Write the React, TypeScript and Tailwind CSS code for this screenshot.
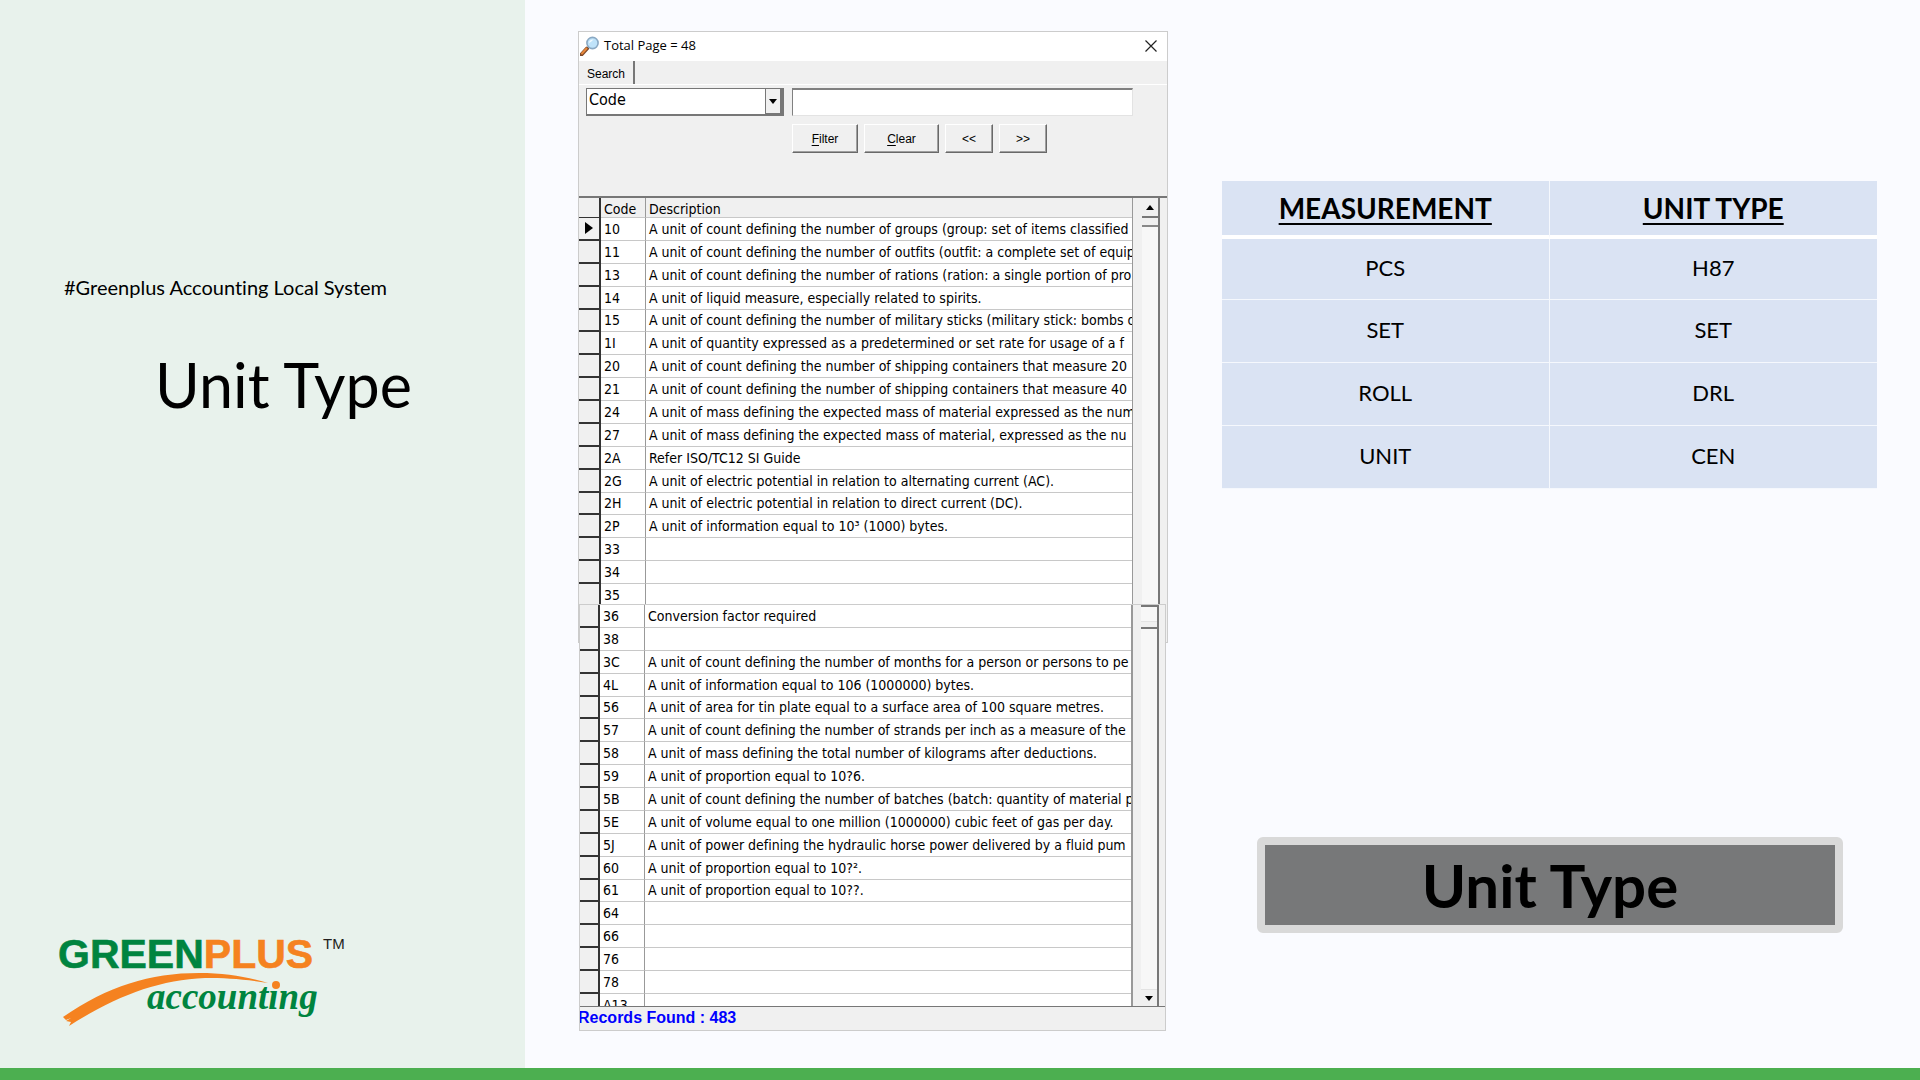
/**
 * Slide about the "Unit Type" codes of the Greenplus Accounting Local System.
 *
 * Left: title panel with the logo. Middle: the lookup window with its code list.
 * Right: the measurement to unit type table and the caption plate.
 */

import { useState } from 'react';

interface UnitRow {
  code: string;
  description?: string;
}

const UPPER_ROWS: UnitRow[] = [
  { code: '10', description: 'A unit of count defining the number of groups (group: set of items classified' },
  { code: '11', description: 'A unit of count defining the number of outfits (outfit: a complete set of equip' },
  { code: '13', description: 'A unit of count defining the number of rations (ration: a single portion of pro' },
  { code: '14', description: 'A unit of liquid measure, especially related to spirits.' },
  { code: '15', description: 'A unit of count defining the number of military sticks (military stick: bombs o' },
  { code: '1I', description: 'A unit of quantity expressed as a predetermined or set rate for usage of a f' },
  { code: '20', description: 'A unit of count defining the number of shipping containers that measure 20' },
  { code: '21', description: 'A unit of count defining the number of shipping containers that measure 40' },
  { code: '24', description: 'A unit of mass defining the expected mass of material expressed as the num' },
  { code: '27', description: 'A unit of mass defining the expected mass of material, expressed as the nu' },
  { code: '2A', description: 'Refer ISO/TC12 SI Guide' },
  { code: '2G', description: 'A unit of electric potential in relation to alternating current (AC).' },
  { code: '2H', description: 'A unit of electric potential in relation to direct current (DC).' },
  { code: '2P', description: 'A unit of information equal to 10³ (1000) bytes.' },
  { code: '33' },
  { code: '34' },
  { code: '35' },
];

const LOWER_ROWS: UnitRow[] = [
  { code: '36', description: 'Conversion factor required' },
  { code: '38' },
  { code: '3C', description: 'A unit of count defining the number of months for a person or persons to pe' },
  { code: '4L', description: 'A unit of information equal to 106 (1000000) bytes.' },
  { code: '56', description: 'A unit of area for tin plate equal to a surface area of 100 square metres.' },
  { code: '57', description: 'A unit of count defining the number of strands per inch as a measure of the' },
  { code: '58', description: 'A unit of mass defining the total number of kilograms after deductions.' },
  { code: '59', description: 'A unit of proportion equal to 10?6.' },
  { code: '5B', description: 'A unit of count defining the number of batches (batch: quantity of material p' },
  { code: '5E', description: 'A unit of volume equal to one million (1000000) cubic feet of gas per day.' },
  { code: '5J', description: 'A unit of power defining the hydraulic horse power delivered by a fluid pum' },
  { code: '60', description: 'A unit of proportion equal to 10?².' },
  { code: '61', description: 'A unit of proportion equal to 10??.' },
  { code: '64' },
  { code: '66' },
  { code: '76' },
  { code: '78' },
  { code: 'A13' },
];

const MEASUREMENTS = [
  ['PCS', 'H87'],
  ['SET', 'SET'],
  ['ROLL', 'DRL'],
  ['UNIT', 'CEN'],
];

const BUTTON =
  'h-[29px] border border-t-white border-l-white border-r-[#696969] border-b-[#696969] bg-[#f0f0f0] text-xs shadow-[inset_-1px_-1px_0_#a0a0a0]';

function Logo() {
  return (
    <svg viewBox="0 0 300 100" className="w-[300px] max-w-full" role="img" aria-label="Greenplus accounting">
      <text x="0" y="38" fontFamily="Liberation Sans, Arial, sans-serif" fontWeight="700" fontSize="41">
        <tspan fill="#00843f" stroke="#00843f" strokeWidth="0.6">GREEN</tspan>
        <tspan fill="#f58220" stroke="#f58220" strokeWidth="0.6">PLUS</tspan>
      </text>
      <text x="265" y="19" fontFamily="Liberation Sans, Arial, sans-serif" fontSize="15" fill="#231f20">
        TM
      </text>
      <path
        d="M5 87 C50 56 92 43 141 43 C168 43 190 47 210 53 C186 49 168 48 147 48 C100 50 58 66 11 96 L13 92 L8 91 L13 88 L8 90 Z"
        fill="#f58220"
      />
      <text
        x="89"
        y="79"
        fontFamily="Liberation Serif, Times New Roman, serif"
        fontStyle="italic"
        fontWeight="700"
        fontSize="37"
        fill="#00843f"
      >
        accountıng
      </text>
      <circle cx="218" cy="55" r="4" fill="#f58220" />
    </svg>
  );
}

function MagnifierIcon() {
  return (
    <svg viewBox="0 0 20 20" className="h-5 w-5" aria-hidden="true">
      <path d="M1.5 18.5 L7 12.5" stroke="#7d4a2c" strokeWidth="4" strokeLinecap="round" />
      <path d="M2 17.5 L6.5 12.5" stroke="#e8873a" strokeWidth="2" strokeLinecap="round" />
      <circle cx="12.5" cy="7" r="5.6" fill="#bfe3fa" stroke="#8aa9c4" strokeWidth="1.6" />
      <path d="M9 7 C9 4.5 11 3.3 13.5 3.5 C12 5 11 6 9 7 Z" fill="#f3fbff" />
    </svg>
  );
}

function UnitRows({ rows, current }: { rows: UnitRow[]; current?: string }) {
  return (
    <>
      {rows.map((row) => (
        <tr key={row.code}>
          <td className="border-r-2 border-b-2 border-[#333] bg-[#f0f0f0] p-0">
            {row.code === current && (
              <svg viewBox="0 0 8 12" className="ml-1.5 h-3 w-2" aria-label="Current row">
                <path d="M0 0 L8 6 L0 12 Z" fill="#000" />
              </svg>
            )}
          </td>
          <td className="border-r border-b border-r-[#999] border-b-[#c8c8c8] p-0 pl-[3px]">{row.code}</td>
          <td className="overflow-hidden border-b border-[#c8c8c8] p-0 pl-[3px] whitespace-nowrap">
            {row.description}
          </td>
        </tr>
      ))}
    </>
  );
}

function LookupWindow() {
  const [field, setField] = useState('Code');
  const [query, setQuery] = useState('');

  return (
    <div className="flex flex-col text-black">
      {/* Upper part: title bar, filter form and first rows */}
      <section className="h-[612px] overflow-hidden border border-[#ccc] bg-[#f0f0f0]">
        <header className="flex h-[29px] items-center bg-white pb-0.5 pl-px font-['Open_Sans',sans-serif] text-[13px]">
          <MagnifierIcon />
          <span className="ml-1">Total Page = 48</span>
          <button type="button" aria-label="Close" className="mr-2.5 ml-auto">
            <svg viewBox="0 0 12 12" className="h-3 w-3" fill="none" stroke="#222" strokeWidth="1.2">
              <path d="M0.5 0.5 L11.5 11.5 M11.5 0.5 L0.5 11.5" />
            </svg>
          </button>
        </header>

        <div className="h-[24px] border-b border-white font-['Liberation_Sans',Arial,sans-serif] text-xs">
          <button type="button" className="h-[23px] w-[56px] border-r-2 border-[#777] pt-0.5">
            Search
          </button>
        </div>

        <form
          className="h-[113px] border-b-2 border-[#777] pt-[3px] pl-[7px] font-['Liberation_Sans',Arial,sans-serif]"
          onSubmit={(e) => e.preventDefault()}
        >
          <div className="flex pr-[34px]">
            <div className="relative w-[198px] shrink-0">
              <select
                aria-label="Search field"
                value={field}
                onChange={(e) => setField(e.target.value)}
                className="h-[28px] w-full appearance-none border border-[#777] bg-white pb-1 pl-0.5 font-['DejaVu_Sans_Condensed','DejaVu_Sans',sans-serif] text-base leading-4 shadow-[inset_-1px_-1px_0_#777]"
              >
                <option>Code</option>
                <option>Description</option>
              </select>
              <span className="pointer-events-none absolute top-px right-0.5 flex h-[25px] w-[17px] items-center justify-center border-r-2 border-b border-l border-[#777] bg-[#f0f0f0]">
                <svg viewBox="0 0 8 5" className="h-[5px] w-2" aria-hidden="true">
                  <path d="M0 0 H8 L4 5 Z" fill="#000" />
                </svg>
              </span>
            </div>
            <input
              aria-label="Search text"
              value={query}
              onChange={(e) => setQuery(e.target.value)}
              className="ml-2 h-[28px] min-w-0 flex-1 border border-t-2 border-t-[#808080] border-r-[#e3e3e3] border-b-[#e3e3e3] border-l-[#808080] bg-white px-1 text-sm outline-none"
            />
          </div>
          <div className="mt-2 flex gap-[6px] pl-[206px]">
            <button type="submit" className={`${BUTTON} w-[66px]`}>
              <span className="underline underline-offset-2">F</span>ilter
            </button>
            <button type="button" onClick={() => setQuery('')} className={`${BUTTON} w-[75px]`}>
              <span className="underline underline-offset-2">C</span>lear
            </button>
            <button type="button" aria-label="Previous page" className={`${BUTTON} w-[48px]`}>
              &lt;&lt;
            </button>
            <button type="button" aria-label="Next page" className={`${BUTTON} w-[48px]`}>
              &gt;&gt;
            </button>
          </div>
        </form>

        <div className="flex h-[406px] overflow-hidden pr-[7px]">
          <div className="min-w-0 flex-1 border-r border-[#999]">
            <table className="h-[409px] w-full table-fixed border-separate border-spacing-0 bg-white font-['DejaVu_Sans_Condensed','DejaVu_Sans',sans-serif] text-sm leading-5">
              <colgroup>
                <col className="w-[22px]" />
                <col className="w-[45px]" />
                <col />
              </colgroup>
              <thead className="bg-[#f0f0f0] text-left">
                <tr className="h-5">
                  <th className="h-5 border-r-2 border-b border-[#333] p-0" />
                  <th className="border-r border-b border-r-[#999] border-b-[#c8c8c8] p-0 pt-0.5 pl-[3px] leading-4 font-normal">
                    Code
                  </th>
                  <th className="border-b border-[#c8c8c8] p-0 pt-0.5 pl-[3px] leading-4 font-normal">Description</th>
                </tr>
              </thead>
              <tbody>
                <UnitRows rows={UPPER_ROWS} current="10" />
              </tbody>
            </table>
          </div>
          <div className="ml-[9px] flex w-[18px] flex-col border-r-2 border-[#777] bg-[#f7f7f7]">
            <span className="flex h-5 items-center justify-center border-b-2 border-[#777] bg-[#f0f0f0]">
              <svg viewBox="0 0 8 5" className="h-[5px] w-2" aria-hidden="true">
                <path d="M0 5 H8 L4 0 Z" fill="#000" />
              </svg>
            </span>
            <span className="h-[9px] border-b-2 border-[#888] bg-[#f0f0f0]" />
          </div>
        </div>
      </section>

      {/* Lower part lies over the tail of the upper one */}
      <section className="relative mt-[-39px] mr-0.5 ml-px flex flex-col border border-[#ccc] bg-[#f0f0f0]">
        <div className="flex h-[402px] overflow-hidden border-b border-[#777] pr-[6px]">
          <div className="min-w-0 flex-1 border-r-2 border-[#999]">
            <table className="h-[412px] w-full table-fixed border-separate border-spacing-0 bg-white font-['DejaVu_Sans_Condensed','DejaVu_Sans',sans-serif] text-sm leading-5">
              <colgroup>
                <col className="w-[20px]" />
                <col className="w-[45px]" />
                <col />
              </colgroup>
              <tbody>
                <UnitRows rows={LOWER_ROWS} />
              </tbody>
            </table>
          </div>
          <div className="ml-2 flex w-[18px] flex-col border-r-2 border-[#777] bg-[#f7f7f7]">
            <span className="h-[16px] border-t-2 border-[#777]" />
            <span className="h-[8px] border-t border-b-2 border-t-[#e3e3e3] border-b-[#777] bg-[#f0f0f0]" />
            <span className="mt-auto flex h-[17px] items-center justify-center border-t border-[#e3e3e3] bg-[#f0f0f0]">
              <svg viewBox="0 0 8 5" className="h-[5px] w-2" aria-hidden="true">
                <path d="M0 0 H8 L4 5 Z" fill="#000" />
              </svg>
            </span>
          </div>
        </div>
        <p className="h-[23px] overflow-hidden font-['Liberation_Sans',Arial,sans-serif] text-base leading-[22px] font-bold text-[#0000ff]">
          <span className="-ml-0.5">Records Found : 483</span>
        </p>
      </section>
    </div>
  );
}

function MeasurementTable() {
  return (
    <table className="w-full table-fixed border-separate border-spacing-0 bg-[#dae3f3] text-center text-[22px] leading-7">
      <thead className="text-[28px]">
        <tr className="h-[58px]">
          {['MEASUREMENT', 'UNIT TYPE'].map((title) => (
            <th
              key={title}
              className="border-r border-b-4 border-[#f5f8fd] border-b-white p-0 font-bold underline decoration-2 underline-offset-4 last:border-r-0"
            >
              {title}
            </th>
          ))}
        </tr>
      </thead>
      <tbody>
        {MEASUREMENTS.map(([measurement, unit]) => (
          <tr key={measurement} className="h-[63px] first:h-[61px]">
            <td className="border-r border-b border-[#f5f8fd] p-0 pb-0.5">{measurement}</td>
            <td className="border-b border-[#f5f8fd] p-0 pb-0.5">{unit}</td>
          </tr>
        ))}
      </tbody>
    </table>
  );
}

export default function App() {
  return (
    <div className="flex min-h-screen flex-col bg-[#fafbff] font-['Lato','Carlito',sans-serif] text-black [font-variant-ligatures:none]">
      <div className="grid flex-1 grid-cols-[525fr_675fr_720fr]">
        <aside className="flex min-w-0 flex-col bg-[#e8f2ec] pt-[273px] pb-[38px]">
          <p className="pl-16 text-xl leading-7">#Greenplus Accounting Local System</p>
          <h1 className="mt-[46px] pl-[42px] text-center text-[61px] leading-[76px]">Unit Type</h1>
          <div className="mt-auto pl-[58px]">
            <Logo />
          </div>
        </aside>

        <main className="min-w-0 pt-[31px] pr-8 pl-[53px]">
          <LookupWindow />
        </main>

        <section className="flex min-w-0 flex-col pt-[181px] pr-[43px] pb-[135px] pl-[22px]">
          <MeasurementTable />
          <div className="mt-auto mr-[34px] ml-[35px] rounded-md border-8 border-[#d9d9d9] bg-[#777879] text-center text-[60px] leading-20 font-bold">
            Unit Type
          </div>
        </section>
      </div>
      <footer className="h-3 bg-[#4caf50]" />
    </div>
  );
}
